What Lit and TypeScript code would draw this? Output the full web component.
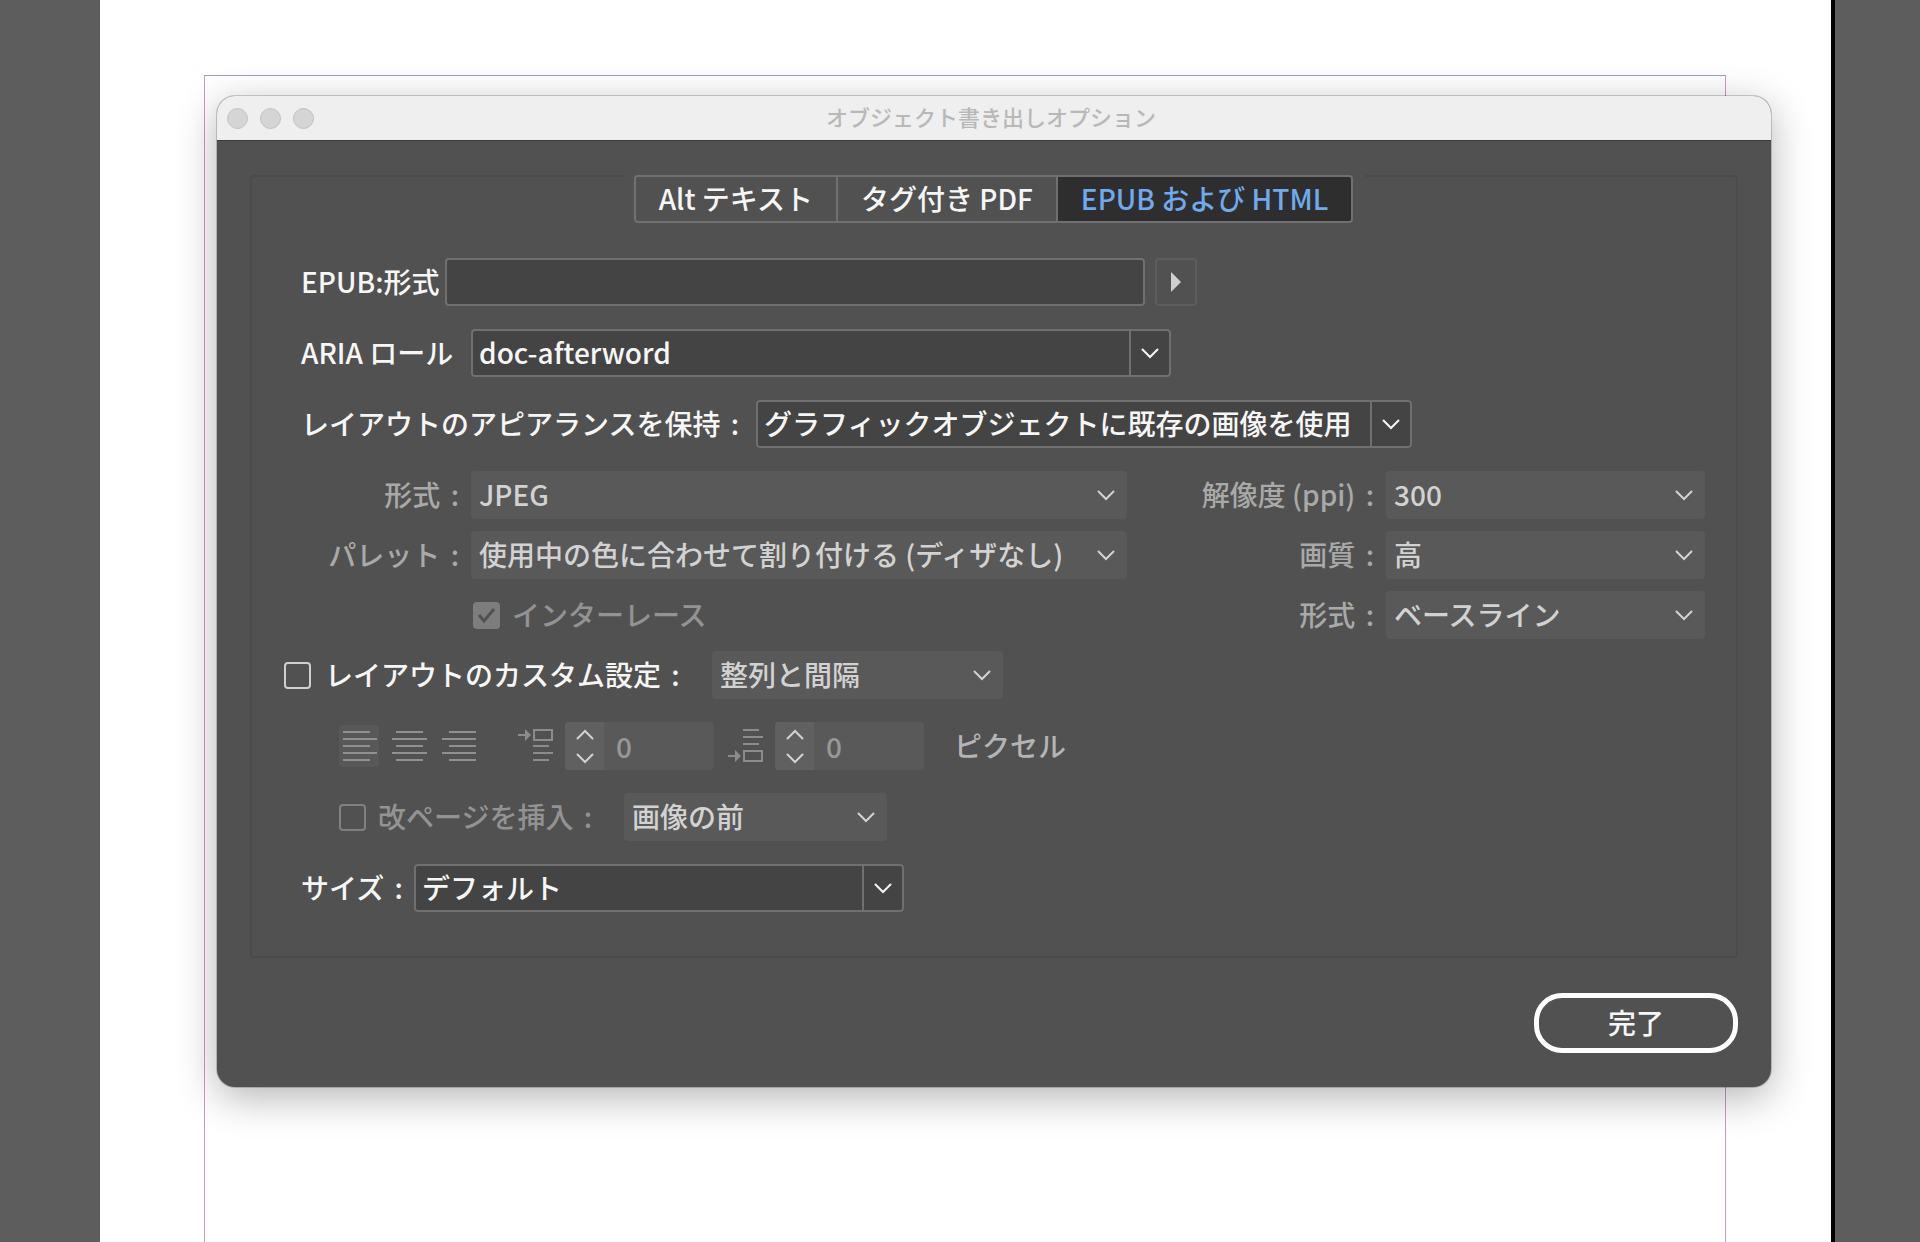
import { LitElement, html, svg, css } from "lit";
import { customElement, state } from "lit/decorators.js";
import { classMap } from "lit/directives/class-map.js";

interface SelectSpec {
  id: string;
  size: string;
  options: string[];
  disabled?: boolean;
}

const TABS = ["Alt テキスト", "タグ付き PDF", "EPUB および HTML"];

const ALIGNMENTS = [
  { label: "左揃え", short: [4, 31], long: [4, 38] },
  { label: "中央揃え", short: [7, 34], long: [3, 38] },
  { label: "右揃え", short: [10, 37], long: [3, 37] },
];

@customElement("app-root")
export class AppRoot extends LitElement {
  static styles = css`
    :host {
      display: block;
      font-family: "Noto Sans CJK JP", "Noto Sans", sans-serif;
      font-size: 28px;
      font-weight: 500;
      line-height: 40px;
      color: #f6f6f6;
    }
    * {
      box-sizing: border-box;
    }
    button,
    input,
    select {
      margin: 0;
      padding: 0;
      border: 0;
      background: none;
      font: inherit;
      color: inherit;
      opacity: 1;
    }
    svg {
      display: block;
    }
    .workspace {
      display: grid;
      grid-template-columns: 100px minmax(0, 1fr) 85px;
      min-height: 100vh;
      background: #5d5d5d;
    }
    .page {
      grid-column: 2;
      position: relative;
      padding: 96px 60px 96px 117px;
      background: #fff;
      border-right: 4px solid #000;
    }
    .guides {
      position: absolute;
      inset: 75px 105px 0 104px;
      border: 1px solid #d398c6;
      border-top-color: #a09ad8;
      border-bottom: 0;
    }
    .dialog {
      position: relative;
      border-radius: 18px;
      background: #515151;
      box-shadow: 0 0 0 1px rgba(0, 0, 0, 0.18), 0 10px 40px rgba(0, 0, 0, 0.3);
      overflow: clip;
    }
    .titlebar {
      display: grid;
      grid-template-columns: 1fr auto 1fr;
      align-items: center;
      height: 45px;
      padding: 0 16px 0 10px;
      background: #efefef;
      border-bottom: 1px solid #3a3a3a;
    }
    .lights {
      display: flex;
      gap: 12px;
    }
    .light {
      width: 21px;
      height: 21px;
      border-radius: 50%;
      border: 1px solid #c2c2c2;
      background: #d5d5d5;
    }
    .title {
      margin: 0;
      padding-bottom: 4px;
      font-size: 22px;
      line-height: 32px;
      font-weight: 500;
      color: #b8b8b8;
    }
    .body {
      padding: 34px 33px;
    }
    .group {
      border: 2px solid #4b4b4b;
      border-radius: 4px;
      padding: 0 33px 44px 32px;
    }
    .tabs {
      display: flex;
      width: fit-content;
      margin: -2px auto 35px;
      padding: 0 12px;
      background: #515151;
    }
    .tab {
      height: 48px;
      padding: 0 23px 2px;
      border: 2px solid #707070;
      border-left-width: 0;
      white-space: nowrap;
    }
    .tab:first-child {
      border-left-width: 2px;
      border-radius: 4px 0 0 4px;
    }
    .tab:last-child {
      border-radius: 0 4px 4px 0;
    }
    .tab.active {
      background: #2e2e2e;
      color: #6eaaec;
    }
    .form {
      display: flex;
      flex-direction: column;
      gap: 23px;
    }
    .row {
      display: flex;
      align-items: center;
      min-height: 48px;
    }
    label,
    .unit {
      padding-bottom: 2px;
      white-space: nowrap;
    }
    .colon {
      margin-left: 4px;
    }
    .inset {
      padding-left: 17px;
      gap: 5px;
    }
    .indented {
      padding-left: 55px;
    }
    .aria-label {
      min-width: 165px;
    }
    .appearance-label {
      min-width: 450px;
    }
    .size-label {
      min-width: 108px;
    }
    .layout-label {
      min-width: 373px;
    }
    .break-label {
      min-width: 234px;
    }
    .text {
      width: 700px;
      min-width: 0;
      height: 48px;
      padding: 0 8px;
      border: 2px solid #707070;
      border-radius: 4px;
      background: #444;
    }
    .arrow {
      display: grid;
      place-items: center;
      width: 42px;
      height: 48px;
      margin-left: 5px;
      border: 2px solid #5d5d5d;
      border-radius: 4px;
    }
    .select {
      display: grid;
      grid-template-columns: minmax(0, 1fr) 42px;
      align-items: center;
      min-width: 0;
      height: 48px;
      border-radius: 4px;
      background: #595959;
      color: #d2d2d2;
    }
    .select select {
      grid-area: 1 / 1 / 2 / 3;
      width: 100%;
      height: 48px;
      padding: 0 42px 2px 8px;
      appearance: none;
      text-overflow: ellipsis;
    }
    .select svg {
      grid-area: 1 / 2;
      justify-self: center;
      pointer-events: none;
    }
    .select.enabled {
      background: #444;
      color: #f6f6f6;
    }
    .select.enabled select {
      border: 2px solid #707070;
      border-radius: 4px;
      padding: 0 42px 2px 6px;
      background: linear-gradient(#707070, #707070) right 38px top / 2px 100% no-repeat;
    }
    .xl {
      width: 700px;
    }
    .lg {
      width: 656px;
    }
    .md {
      width: 490px;
    }
    .sm {
      width: 319px;
    }
    .xs {
      width: 291px;
    }
    .xxs {
      width: 263px;
    }
    .raster {
      display: flex;
      justify-content: space-between;
      gap: 24px;
      margin-right: -2px;
    }
    .pairs {
      display: grid;
      grid-template-columns: auto minmax(0, auto);
      grid-auto-rows: 48px;
      align-items: center;
      gap: 12px;
      color: #a9a9a9;
    }
    .pairs > label {
      text-align: right;
    }
    .pairs.left {
      grid-template-columns: 175px minmax(0, auto);
    }
    .stack {
      display: flex;
      flex-direction: column;
      gap: 12px;
    }
    .check {
      display: flex;
      align-items: center;
      gap: 14px;
    }
    .check.dim {
      color: #939393;
      gap: 12px;
    }
    .interlace {
      grid-column: 2;
      padding-left: 2px;
    }
    .box {
      flex: none;
      width: 27px;
      height: 27px;
      appearance: none;
      border: 2px solid #cfcfcf;
      border-radius: 4px;
    }
    .dim .box {
      border-color: #808080;
    }
    .mark {
      display: grid;
    }
    .mark > * {
      grid-area: 1 / 1;
    }
    .dim .box.filled {
      border-color: #7d7d7d;
      background: #7d7d7d;
    }
    .aligns {
      display: flex;
      gap: 10px;
      margin-right: 39px;
    }
    .align {
      width: 40px;
      height: 42px;
      border-radius: 4px;
      color: #909090;
    }
    .align.active {
      background: #585858;
    }
    .spacing {
      display: flex;
      align-items: center;
      gap: 11px;
      margin-right: 14px;
      color: #8c8c8c;
    }
    .stepper {
      display: flex;
      width: 149px;
      height: 48px;
      border-radius: 4px;
      background: #595959;
      overflow: hidden;
    }
    .steps {
      display: grid;
      grid-template-rows: 1fr 1fr;
      width: 39px;
      flex: none;
      background: #606060;
      color: #d2d2d2;
    }
    .step {
      display: grid;
      place-items: center;
    }
    .amount {
      flex: 1;
      min-width: 0;
      padding: 0 12px;
      color: #989898;
    }
    .unit {
      padding-left: 16px;
      color: #b4b4b4;
    }
    .footer {
      display: flex;
      justify-content: flex-end;
      margin-top: 35px;
    }
    .done {
      width: 204px;
      height: 60px;
      padding-bottom: 2px;
      border: 5px solid #fff;
      border-radius: 28px;
    }
  `;

  @state() private tab = 2;

  private colon() {
    return html`<span class="colon"> :</span>`;
  }

  private chevron(up = false) {
    return html`<svg width="18" height="11" viewBox="0 0 18 11" fill="none" stroke="currentColor" stroke-width="2" stroke-linecap="round" aria-hidden="true">
      <path d=${up ? "M1.5 9.5 9 2l7.5 7.5" : "M1.5 1.5 9 9l7.5-7.5"} />
    </svg>`;
  }

  private select({ id, size, options, disabled = false }: SelectSpec) {
    return html`<div class=${classMap({ select: true, [size]: true, enabled: !disabled })}>
      <select id=${id} ?disabled=${disabled}>
        ${options.map((o) => html`<option>${o}</option>`)}
      </select>
      ${this.chevron()}
    </div>`;
  }

  private alignIcon(short: number[], long: number[]) {
    return html`<svg width="40" height="42" viewBox="0 0 40 42" stroke="currentColor" stroke-width="2" aria-hidden="true">
      ${[7, 14, 21, 28, 35].map((y, i) => {
        const [a, b] = i % 2 ? long : short;
        return svg`<path d="M${a} ${y}H${b}" />`;
      })}
    </svg>`;
  }

  private spacingIcon(before: boolean) {
    const boxY = before ? 1 : 22;
    const arrowY = before ? 7 : 28;
    const lines = before ? [18, 25, 32] : [2, 9, 16];
    return html`<svg width="36" height="36" viewBox="0 0 36 36" fill="none" stroke="currentColor" stroke-width="2" aria-hidden="true">
      <path d="M0 ${arrowY}H8" />
      <path d="M7 ${arrowY - 6}l6 6-6 6z" fill="currentColor" stroke="none" />
      <rect x="16" y=${boxY + 1} width="18" height="10" />
      ${lines.map((y, i) => svg`<path d="M15 ${y}H${i === 1 ? 35 : 31}" />`)}
    </svg>`;
  }

  private stepper(id: string, label: string, before: boolean) {
    return html`<div class="spacing">
      ${this.spacingIcon(before)}
      <div class="stepper">
        <div class="steps">
          <button class="step" type="button" disabled aria-label="${label}を増やす">${this.chevron(true)}</button>
          <button class="step" type="button" disabled aria-label="${label}を減らす">${this.chevron()}</button>
        </div>
        <input class="amount" id=${id} type="text" inputmode="numeric" value="0" aria-label=${label} disabled />
      </div>
    </div>`;
  }

  render() {
    return html`<div class="workspace">
      <main class="page">
        <div class="guides"></div>
        <section class="dialog" role="dialog" aria-labelledby="title">
          <header class="titlebar">
            <div class="lights">
              <button class="light" type="button" aria-label="閉じる"></button>
              <button class="light" type="button" aria-label="しまう"></button>
              <button class="light" type="button" aria-label="拡大"></button>
            </div>
            <h1 class="title" id="title">オブジェクト書き出しオプション</h1>
          </header>
          <div class="body">
            <div class="group">
              <div class="tabs" role="tablist">
                ${TABS.map(
                  (name, i) => html`<button
                    class=${classMap({ tab: true, active: i === this.tab })}
                    type="button"
                    role="tab"
                    aria-selected=${i === this.tab}
                    @click=${() => (this.tab = i)}
                  >${name}</button>`
                )}
              </div>
              <form class="form" @submit=${(e: Event) => e.preventDefault()}>
                <div class="row inset">
                  <label for="epub-type">EPUB:形式</label>
                  <input class="text" id="epub-type" type="text" />
                  <button class="arrow" type="button" aria-label="形式を選択">
                    <svg width="10" height="20" viewBox="0 0 10 20" aria-hidden="true"><path d="M0 0l10 10L0 20z" fill="#cfcfcf" /></svg>
                  </button>
                </div>
                <div class="row inset">
                  <label class="aria-label" for="aria-role">ARIA ロール</label>
                  ${this.select({ id: "aria-role", size: "xl", options: ["doc-afterword"] })}
                </div>
                <div class="row inset">
                  <label class="appearance-label" for="appearance">レイアウトのアピアランスを保持${this.colon()}</label>
                  ${this.select({ id: "appearance", size: "lg", options: ["グラフィックオブジェクトに既存の画像を使用"] })}
                </div>
                <div class="stack">
                  <div class="raster">
                    <div class="pairs left">
                      <label for="format">形式${this.colon()}</label>
                      ${this.select({ id: "format", size: "lg", options: ["JPEG"], disabled: true })}
                      <label for="palette">パレット${this.colon()}</label>
                      ${this.select({ id: "palette", size: "lg", options: ["使用中の色に合わせて割り付ける (ディザなし)"], disabled: true })}
                      <div class="check dim interlace">
                        <span class="mark">
                          <input class="box filled" id="interlace" type="checkbox" checked disabled />
                          <svg width="27" height="27" viewBox="0 0 27 27" fill="none" stroke="#515151" stroke-width="3" aria-hidden="true"><path d="M6 13l5 6 10-12" /></svg>
                        </span>
                        <label for="interlace">インターレース</label>
                      </div>
                    </div>
                    <div class="pairs">
                      <label for="resolution">解像度 (ppi)${this.colon()}</label>
                      ${this.select({ id: "resolution", size: "sm", options: ["300"], disabled: true })}
                      <label for="quality">画質${this.colon()}</label>
                      ${this.select({ id: "quality", size: "sm", options: ["高"], disabled: true })}
                      <label for="method">形式${this.colon()}</label>
                      ${this.select({ id: "method", size: "sm", options: ["ベースライン"], disabled: true })}
                    </div>
                  </div>
                  <div class="row check">
                    <input class="box" id="custom-layout" type="checkbox" />
                    <label class="layout-label" for="custom-layout">レイアウトのカスタム設定${this.colon()}</label>
                    ${this.select({ id: "layout-kind", size: "xs", options: ["整列と間隔"], disabled: true })}
                  </div>
                </div>
                <div class="row indented">
                  <div class="aligns">
                    ${ALIGNMENTS.map(
                      (a, i) => html`<button class=${classMap({ align: true, active: i === 0 })} type="button" disabled aria-label=${a.label}>
                        ${this.alignIcon(a.short, a.long)}
                      </button>`
                    )}
                  </div>
                  ${this.stepper("space-before", "前の間隔", true)} ${this.stepper("space-after", "後の間隔", false)}
                  <span class="unit">ピクセル</span>
                </div>
                <div class="row indented check dim">
                  <input class="box" id="page-break" type="checkbox" disabled />
                  <label class="break-label" for="page-break">改ページを挿入${this.colon()}</label>
                  ${this.select({ id: "break-position", size: "xxs", options: ["画像の前"], disabled: true })}
                </div>
                <div class="row inset">
                  <label class="size-label" for="size">サイズ${this.colon()}</label>
                  ${this.select({ id: "size", size: "md", options: ["デフォルト"] })}
                </div>
              </form>
            </div>
            <footer class="footer">
              <button class="done" type="button">完了</button>
            </footer>
          </div>
        </section>
      </main>
    </div>`;
  }
}
